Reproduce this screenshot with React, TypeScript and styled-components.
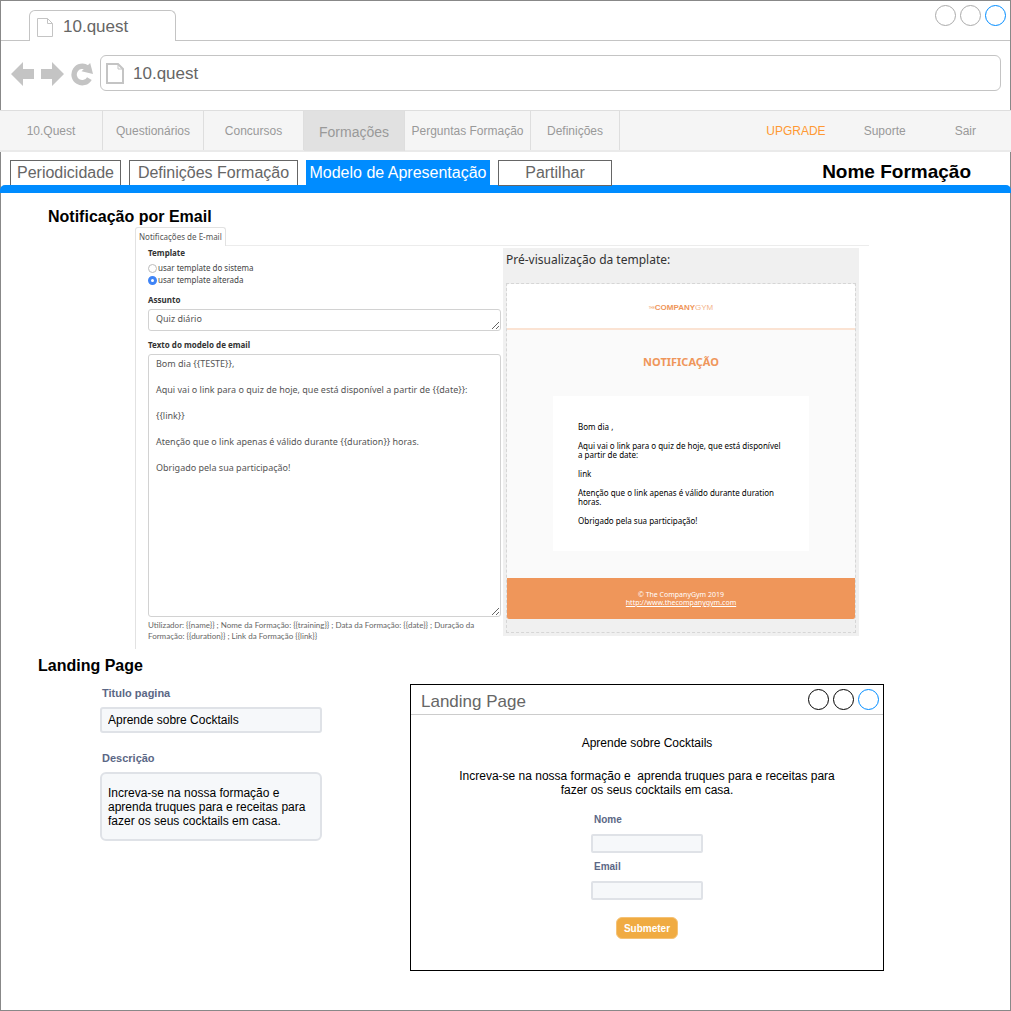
import React from "react";
import styled, { createGlobalStyle, css } from "styled-components";

const sans = `"Liberation Sans", Arial, Helvetica, sans-serif`;
const humanist = `"Noto Sans", "Open Sans", sans-serif`;
const blue = "#008cff";
const orange = "#ef965a";

const GlobalStyle = createGlobalStyle`
  *, *::before, *::after { box-sizing: border-box; }
  body { margin: 0; background: #fff; font-family: ${sans}; }
  h1, h2, h3, p { margin: 0; }
  a { color: inherit; text-decoration: none; }
  button, input, textarea { font: inherit; margin: 0; }
`;

const Browser = styled.div`
  display: flex;
  flex-direction: column;
  min-height: 100vh;
  border: 1px solid #888;
`;

/* Browser chrome */

const TabStrip = styled.header`
  display: flex;
  height: 40px;
  padding-top: 9px;
`;

const StripStart = styled.div`
  flex: 0 0 28px;
  border-bottom: 1px solid #c4c4c4;
`;

const BrowserTab = styled.div`
  display: flex;
  align-items: center;
  gap: 10px;
  width: 147px;
  padding: 2px 7px 0;
  border: 1px solid #c4c4c4;
  border-bottom: 0;
  border-radius: 6px 6px 0 0;
  color: #666;
  font-size: 17px;
  line-height: 20px;
`;

const StripEnd = styled.div`
  flex: 1;
  display: flex;
  border-bottom: 1px solid #c4c4c4;
  justify-content: flex-end;
`;

const WindowButtons = styled.div<{ $raised?: boolean }>`
  display: flex;
  gap: 4px;
  margin-right: 4px;
  margin-top: ${(p) => (p.$raised ? "-5px" : "0")};
`;

const Circle = styled.button<{ $color: string }>`
  width: 21px;
  height: 21px;
  padding: 0;
  border: 1px solid ${(p) => p.$color};
  border-radius: 50%;
  background: transparent;
`;

const AddressRow = styled.div`
  display: flex;
  align-items: center;
  gap: 7px;
  height: 69px;
  padding: 0 9px 6px 10px;
`;

const IconButton = styled.button`
  display: flex;
  padding: 2px 0 0;
  border: 0;
  background: none;
`;

const AddressBox = styled.label`
  flex: 1;
  display: flex;
  align-items: center;
  gap: 9px;
  height: 36px;
  padding: 2px 5px 0;
  border: 1px solid #c4c4c4;
  border-radius: 6px;
`;

const AddressInput = styled.input`
  flex: 1;
  min-width: 0;
  padding: 0;
  border: 0;
  outline: 0;
  color: #666;
  font-size: 17px;
  line-height: 20px;
`;

/* Site navigation */

const MainNav = styled.nav`
  display: flex;
  height: 42px;
  margin: 0 -1px;
  border-top: 1px solid #dedede;
  border-bottom: 2px solid #eaeaea;
  background: #f5f5f5;
  color: #999;
  font-size: 12px;
`;

const NavLink = styled.a<{ $width: number; $active?: boolean }>`
  display: flex;
  align-items: center;
  justify-content: center;
  width: ${(p) => p.$width}px;
  border-right: 1px solid #dedede;
  ${(p) =>
    p.$active &&
    css`
      padding-top: 2px;
      margin-bottom: -1px;
      background: #e1e1e1;
      font-size: 14px;
    `}
`;

const AccountLinks = styled.div`
  display: flex;
  align-items: center;
  gap: 38px;
  margin-left: auto;
  padding-right: 35px;
`;

const AccountLink = styled.a<{ $accent?: boolean; $wide?: boolean }>`
  color: ${(p) => (p.$accent ? "#ff9933" : "inherit")};
  padding-left: ${(p) => (p.$wide ? "11px" : "0")};
`;

const SectionBar = styled.div`
  display: flex;
  align-items: flex-end;
  height: 33px;
  padding: 0 39px 0 9px;
`;

const SectionTabs = styled.nav`
  display: flex;
  gap: 8px;
`;

const SectionTab = styled.a<{ $width: number; $active?: boolean; $front?: boolean }>`
  display: flex;
  align-items: center;
  justify-content: center;
  width: ${(p) => p.$width}px;
  height: 25px;
  border: 1px solid #666;
  border-bottom: 0;
  color: #666;
  font-size: 16px;
  white-space: nowrap;
  ${(p) =>
    p.$active &&
    css`
      border: 0;
      background: ${blue};
      color: #fff;
    `}
  ${(p) =>
    p.$front &&
    css`
      position: relative;
      height: 26px;
      margin-bottom: -1px;
      border-bottom: 1px solid #666;
    `}
`;

const CourseName = styled.h1`
  margin-left: auto;
  color: #000;
  font-size: 19px;
  line-height: 27px;
`;

const AccentBar = styled.div`
  height: 8px;
  margin: 0 -1px;
  border-radius: 5px 5px 0 0;
  background: ${blue};
`;

const SectionTitle = styled.h2<{ $indent: number }>`
  padding-left: ${(p) => p.$indent}px;
  font-size: 16px;
  line-height: 20px;
`;

/* Email notification */

const EmailSection = styled.section`
  padding-top: 14px;
`;

const Panel = styled.div`
  margin: 0 141px 0 134px;
  color: #444;
  font-family: ${humanist};
  font-size: 8px;
  line-height: 12px;
`;

const PanelTabs = styled.div`
  display: flex;
  &::after {
    content: "";
    flex: 1;
    border-bottom: 1px solid #ececec;
  }
`;

const PanelTab = styled.button`
  height: 19px;
  padding: 0 3px;
  border: 1px solid #e2e2e2;
  border-bottom: 0;
  border-radius: 3px 3px 0 0;
  background: #fff;
  color: #555;
  line-height: 12px;
`;

const PanelBody = styled.div`
  display: grid;
  grid-template-columns: 353fr 356fr;
  gap: 2px;
  padding: 1px 10px 7px 12px;
  border-left: 1px solid #e2e2e2;
`;

const TemplateForm = styled.form`
  display: flex;
  flex-direction: column;
`;

const FormLabel = styled.label`
  margin: 8px 0 3px;
  color: #333;
  font-weight: bold;
`;

const RadioGroup = styled.fieldset`
  display: flex;
  flex-direction: column;
  min-width: 0;
  margin: 0;
  padding: 0;
  border: 0;
`;

const RadioLegend = styled.legend`
  padding: 0 0 3px;
  color: #333;
  font-weight: bold;
`;

const RadioRow = styled.label`
  display: flex;
  align-items: center;
  gap: 1px;
  height: 12px;
`;

const Radio = styled.input`
  appearance: none;
  width: 9px;
  height: 9px;
  margin: 0;
  border: 1px solid #bbb;
  border-radius: 50%;
  background: #fff;
  &:checked {
    border: 3px solid #3f84f6;
  }
`;

const TextBox = styled.textarea<{ $height: number }>`
  display: block;
  width: 100%;
  height: ${(p) => p.$height}px;
  padding: 2px 7px;
  border: 1px solid #d2d2d2;
  border-radius: 3px;
  outline: 0;
  background: #fff;
  color: #555;
  font-size: 9px;
  line-height: 13px;
  resize: vertical;
`;

const Hint = styled.p`
  padding-top: 3px;
  color: #666;
  font-family: Lato, sans-serif;
  line-height: 11px;
`;

const Preview = styled.div`
  display: flex;
  flex-direction: column;
  align-self: start;
  margin-top: 1px;
  padding: 0 3px 3px;
  background: #f0f0f0;
`;

const PreviewTitle = styled.h3`
  padding: 4px 0 15px;
  color: #333;
  font-size: 12px;
  font-weight: normal;
  line-height: 16px;
`;

const PreviewFrame = styled.div`
  padding-bottom: 13px;
  border: 1px dashed #d6d6d6;
`;

const MailHeader = styled.div`
  display: flex;
  align-items: center;
  justify-content: center;
  height: 46px;
  padding-top: 4px;
  border-bottom: 2px solid #fbe3d3;
  border-radius: 2px 2px 0 0;
  background: #fff;
  color: ${orange};
  font-family: ${sans};
`;

const LogoThe = styled.span`
  font-size: 3px;
  line-height: 4px;
`;

const LogoGym = styled.span`
  opacity: 0.7;
`;

const MailBody = styled.div`
  display: flex;
  flex-direction: column;
  align-items: center;
  gap: 26px;
  padding: 24px 46px 27px;
  background: #fafafa;
`;

const MailTitle = styled.h3`
  color: ${orange};
  font-size: 11px;
  line-height: 16px;
`;

const MailCard = styled.div`
  display: flex;
  flex-direction: column;
  gap: 10px;
  width: 100%;
  padding: 26px 25px;
  background: #fff;
  color: #000;
  font-size: 8px;
  line-height: 9px;
`;

const MailFooter = styled.div`
  padding: 13px 0 12px;
  border-radius: 0 0 2px 2px;
  background: ${orange};
  color: #fff;
  font-size: 7px;
  line-height: 8px;
  text-align: center;
  a {
    text-decoration: underline;
  }
`;

/* Landing page */

const LandingSection = styled.section`
  padding-top: 7px;
`;

const LandingRow = styled.div`
  display: flex;
  align-items: flex-start;
  gap: 88px;
  padding: 8px 126px 24px 99px;
`;

const LandingForm = styled.form`
  display: flex;
  flex-direction: column;
  flex: 0 0 222px;
  padding-top: 2px;
`;

const FieldLabel = styled.label`
  padding: 0 2px;
  color: #5b6785;
  font-size: 11px;
  font-weight: bold;
  line-height: 14px;
  margin-bottom: 7px;
`;

const fieldBox = css`
  width: 100%;
  border: 2px solid #dfe2e7;
  border-radius: 3px;
  outline: 0;
  background: #f6f8fa;
  color: #000;
  font-size: 12px;
  line-height: 14px;
`;

const Field = styled.input`
  ${fieldBox}
  height: 26px;
  margin-bottom: 18px;
  padding: 0 6px;
`;

const FieldArea = styled.textarea`
  ${fieldBox}
  height: 69px;
  padding: 12px 6px;
  border-radius: 6px;
  resize: none;
  overflow: hidden;
`;

const LandingWindow = styled.article`
  flex: 1;
  min-width: 0;
  border: 1px solid #000;
`;

const WindowBar = styled.div`
  display: flex;
  align-items: center;
  justify-content: space-between;
  height: 30px;
  padding-left: 10px;
  border-bottom: 1px solid #ccc;
`;

const WindowTitle = styled.h3`
  padding-top: 5px;
  color: #666;
  font-size: 17px;
  font-weight: normal;
  line-height: 20px;
`;

const WindowBody = styled.div`
  display: flex;
  flex-direction: column;
  align-items: center;
  padding: 21px 40px 31px;
  font-size: 12px;
  line-height: 14px;
  text-align: center;
`;

const Lead = styled.p`
  max-width: 390px;
  padding: 19px 0 17px;
`;

const SignupForm = styled.form`
  display: flex;
  flex-direction: column;
  gap: 8px;
  width: 112px;
  text-align: left;
`;

const SignupLabel = styled.label`
  padding: 0 3px;
  color: #5b6785;
  font-size: 10px;
  font-weight: bold;
  line-height: 12px;
`;

const SignupInput = styled.input`
  ${fieldBox}
  height: 19px;
  padding: 0 4px;
  border-radius: 2px;
`;

const Submit = styled.button`
  align-self: center;
  width: 62px;
  height: 22px;
  margin-top: 9px;
  padding: 2px 0 0;
  border: 1px solid #f5c276;
  border-radius: 6px;
  background: #f0ab42;
  color: #fff;
  font-size: 10px;
  font-weight: bold;
  line-height: 12px;
`;

const FileIcon = ({ w, h, stroke }: { w: number; h: number; stroke: number }) => {
  const i = stroke / 2;
  return (
    <svg width={w} height={h} fill="none" stroke="#c4c4c4" strokeWidth={stroke} aria-hidden="true">
      <path d={`M${i} ${i}H${w - 5 - i}L${w - i} ${5 + i}V${h - i}H${i}Z`} />
      <path d={`M${w - 5 - i} ${i}V${5 + i}H${w - i}`} strokeWidth="1" />
    </svg>
  );
};

const Arrow = ({ flip }: { flip?: boolean }) => (
  <svg width="23" height="24" viewBox="0 0 23 24" fill="#c4c4c4" aria-hidden="true">
    <path d={flip ? "M23 12 11 0V7H0V17H11V24Z" : "M0 12 12 0V7H23V17H12V24Z"} />
  </svg>
);

const Reload = () => (
  <svg width="22" height="24" viewBox="0 0 22 24" aria-hidden="true">
    <path d="M18.4 16.6A8.2 8.2 0 1 1 16 5.8" fill="none" stroke="#c4c4c4" strokeWidth="5.4" />
    <path d="M19.2 1 22 12 10.5 9.2Z" fill="#c4c4c4" />
  </svg>
);

const circles = (base: string) => [
  { label: "Minimizar", color: base },
  { label: "Maximizar", color: base },
  { label: "Fechar", color: blue },
];

const navItems = [
  { label: "10.Quest", width: 103 },
  { label: "Questionários", width: 101 },
  { label: "Concursos", width: 100 },
  { label: "Formações", width: 101, active: true },
  { label: "Perguntas Formação", width: 126 },
  { label: "Definições", width: 89 },
];

const sectionTabs = [
  { label: "Periodicidade", width: 111 },
  { label: "Definições Formação", width: 169 },
  { label: "Modelo de Apresentação", width: 184, active: true },
  { label: "Partilhar", width: 114, front: true },
];

const mailTemplate = `Bom dia {{TESTE}},

Aqui vai o link para o quiz de hoje, que está disponível a partir de {{date}}:

{{link}}

Atenção que o link apenas é válido durante {{duration}} horas.

Obrigado pela sua participação!`;

const mailPreview = [
  "Bom dia ,",
  "Aqui vai o link para o quiz de hoje, que está disponível a partir de date:",
  "link",
  "Atenção que o link apenas é válido durante duration horas.",
  "Obrigado pela sua participação!",
];

export default function App() {
  return (
    <>
      <GlobalStyle />
      <Browser>
        <TabStrip>
          <StripStart />
          <BrowserTab>
            <FileIcon w={16} h={19} stroke={1} />
            10.quest
          </BrowserTab>
          <StripEnd>
            <WindowButtons $raised>
              {circles("#aaa").map((c) => (
                <Circle key={c.label} $color={c.color} aria-label={c.label} />
              ))}
            </WindowButtons>
          </StripEnd>
        </TabStrip>

        <AddressRow>
          <IconButton aria-label="Voltar"><Arrow /></IconButton>
          <IconButton aria-label="Avançar"><Arrow flip /></IconButton>
          <IconButton aria-label="Recarregar"><Reload /></IconButton>
          <AddressBox>
            <FileIcon w={18} h={21} stroke={2} />
            <AddressInput aria-label="Endereço" defaultValue="10.quest" />
          </AddressBox>
        </AddressRow>

        <MainNav>
          {navItems.map((n) => (
            <NavLink key={n.label} href="#" $width={n.width} $active={n.active}>
              {n.label}
            </NavLink>
          ))}
          <AccountLinks>
            <AccountLink href="#" $accent>UPGRADE</AccountLink>
            <AccountLink href="#">Suporte</AccountLink>
            <AccountLink href="#" $wide>Sair</AccountLink>
          </AccountLinks>
        </MainNav>

        <SectionBar>
          <SectionTabs>
            {sectionTabs.map((t) => (
              <SectionTab key={t.label} href="#" $width={t.width} $active={t.active} $front={t.front}>
                {t.label}
              </SectionTab>
            ))}
          </SectionTabs>
          <CourseName>Nome Formação</CourseName>
        </SectionBar>
        <AccentBar />

        <EmailSection>
          <SectionTitle $indent={47}>Notificação por Email</SectionTitle>
          <Panel>
            <PanelTabs>
              <PanelTab>Notificações de E-mail</PanelTab>
            </PanelTabs>
            <PanelBody>
              <TemplateForm>
                <RadioGroup>
                  <RadioLegend>Template</RadioLegend>
                  <RadioRow>
                    <Radio type="radio" name="template" />
                    usar template do sistema
                  </RadioRow>
                  <RadioRow>
                    <Radio type="radio" name="template" defaultChecked />
                    usar template alterada
                  </RadioRow>
                </RadioGroup>
                <FormLabel htmlFor="subject">Assunto</FormLabel>
                <TextBox id="subject" $height={22} rows={1} defaultValue="Quiz diário" />
                <FormLabel htmlFor="body">Texto do modelo de email</FormLabel>
                <TextBox id="body" $height={263} defaultValue={mailTemplate} />
                <Hint>
                  {"Utilizador: {{name}} ; Nome da Formação: {{training}} ; Data da Formação: {{date}} ; Duração da Formação: {{duration}} ; Link da Formação {{link}}"}
                </Hint>
              </TemplateForm>
              <Preview>
                <PreviewTitle>Pré-visualização da template:</PreviewTitle>
                <PreviewFrame>
                  <MailHeader>
                    <LogoThe>THE</LogoThe>
                    <b>COMPANY</b>
                    <LogoGym>GYM</LogoGym>
                  </MailHeader>
                  <MailBody>
                    <MailTitle>NOTIFICAÇÃO</MailTitle>
                    <MailCard>
                      {mailPreview.map((line) => (
                        <p key={line}>{line}</p>
                      ))}
                    </MailCard>
                  </MailBody>
                  <MailFooter>
                    <p>© The CompanyGym 2019</p>
                    <a href="#">http://www.thecompanygym.com</a>
                  </MailFooter>
                </PreviewFrame>
              </Preview>
            </PanelBody>
          </Panel>
        </EmailSection>

        <LandingSection>
          <SectionTitle $indent={37}>Landing Page</SectionTitle>
          <LandingRow>
            <LandingForm>
              <FieldLabel htmlFor="title">Titulo pagina</FieldLabel>
              <Field id="title" defaultValue="Aprende sobre Cocktails" />
              <FieldLabel htmlFor="description">Descrição</FieldLabel>
              <FieldArea
                id="description"
                defaultValue="Increva-se na nossa formação e aprenda truques para e receitas para fazer os seus cocktails em casa."
              />
            </LandingForm>
            <LandingWindow>
              <WindowBar>
                <WindowTitle>Landing Page</WindowTitle>
                <WindowButtons>
                  {circles("#000").map((c) => (
                    <Circle key={c.label} $color={c.color} aria-label={c.label} />
                  ))}
                </WindowButtons>
              </WindowBar>
              <WindowBody>
                <p>Aprende sobre Cocktails</p>
                <Lead>
                  {"Increva-se na nossa formação e \u00a0aprenda truques para e receitas para fazer os seus cocktails em casa."}
                </Lead>
                <SignupForm>
                  <SignupLabel htmlFor="name">Nome</SignupLabel>
                  <SignupInput id="name" />
                  <SignupLabel htmlFor="email">Email</SignupLabel>
                  <SignupInput id="email" type="email" />
                  <Submit type="button">Submeter</Submit>
                </SignupForm>
              </WindowBody>
            </LandingWindow>
          </LandingRow>
        </LandingSection>
      </Browser>
    </>
  );
}
